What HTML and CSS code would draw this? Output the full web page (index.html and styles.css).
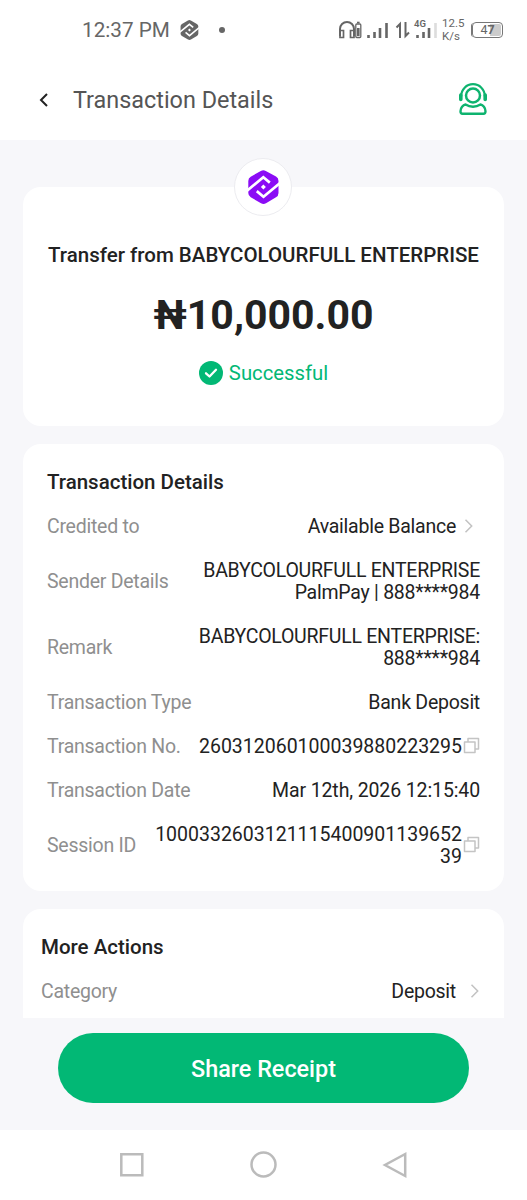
FILE: index.html
```html
<!DOCTYPE html>
<html lang="en">
<head>
    <meta charset="UTF-8">
    <meta name="viewport" content="width=device-width, initial-scale=1.0">
    <title>Transaction Details</title>
    <link rel="stylesheet" href="styles.css">
</head>
<body>
    <!-- Shared icons -->
    <svg class="sprite" width="0" height="0">
        <symbol id="logo" viewBox="0 0 32 34">
            <path fill="currentColor" d="M13.3 .9a5 5 0 0 1 5 0L28.500 6.600a5 5 0 0 1 2.500 4.300V23a5 5 0 0 1-2.500 4.300l-10 5.900a5 5 0 0 1-5 0L3.200 27.300A5 5 0 0 1 .8 23V11a5 5 0 0 1 2.400-4.300z"/>
            <path class="logo-line" d="M-.5 20.700 15.800 7.300l6.500 5.300M32.500 13 16 26.700l-6.700-5.600"/>
            <path class="logo-dot" d="M15.900 14.600l2.500 2.400-2.500 2.400-2.500-2.400z"/>
        </symbol>
        <symbol id="chevron" viewBox="0 0 10 16">
            <path d="M1.500 1.800 7.700 8l-6.200 6.200" fill="none" stroke="#c2c2c2" stroke-width="1.500"/>
        </symbol>
        <symbol id="copy" viewBox="0 0 18 18">
            <path d="M5 4.500V1.500h10.500v10.500h-3.500M1.500 5H12v10.500H1.500z" fill="none" stroke="#c4c4c4" stroke-width="1.500" stroke-linejoin="round"/>
        </symbol>
    </svg>

    <div class="status-bar">
        <span class="time">12:37 PM</span>
        <svg class="status-logo" width="19" height="20"><use href="#logo"/></svg>
        <span class="dot"></span>
        <svg class="signals" width="100" height="24" viewBox="0 0 100 24" fill="none" stroke="#666">
            <path d="M2 18V11a7 7 0 0 1 14 0v7" stroke-width="2"/>
            <path d="M2 12.500h3.500v7H2zM12.500 12.500H16v7h-3.500z" stroke-width="1.700"/>
            <rect x="17.800" y="6" width="5" height="13.500" rx="1" fill="#fff" stroke-width="1.300"/>
            <path d="M20.300 10v8" stroke-width="2.600"/><path d="M19 4.500h2.600" stroke-width="1.600"/>
            <path d="M30.500 17v3M36.500 14v6M42 10v10M48.500 5v15" stroke-width="2.600"/>
            <path d="M58.500 9.500l3.500-3.500v14M67.500 4v14l3.500-3.500" stroke-width="2"/>
            <path d="M79.500 17v3M85.500 14v6M91 10v10" stroke-width="2.600"/>
            <path d="M97.500 5v15" stroke="#ddd" stroke-width="2.600"/>
            <text class="network" x="76" y="8.500">4G</text>
        </svg>
        <span class="speed">12.5<br>K/s</span>
        <div class="battery">4<b>7</b></div>
    </div>

    <header class="header">
        <svg class="back" width="12" height="16" viewBox="0 0 12 16">
            <path d="M9 2 3 8l6 6" fill="none" stroke="#222" stroke-width="2"/>
        </svg>
        <h1>Transaction Details</h1>
        <svg class="support" width="30" height="34" viewBox="0 0 30 34" fill="none" stroke="#0eb36f">
            <circle cx="15" cy="12.500" r="7" stroke-width="2.500"/>
            <path d="M3.200 13.500V13a11.800 11.800 0 0 1 23.600 0v.5" stroke-width="2.200"/>
            <path d="M2.800 12v4.500M27.200 12v4.500" stroke-width="3.600" stroke-linecap="round"/>
            <path d="M7.500 21.500c2 1.300 4.500 2.300 7.500 2.300s5.500-1 7.500-2.300c2.500.5 5 3.200 5 6.700 0 1.500-.5 2.500-2 2.500H4.500c-1.500 0-2-1-2-2.500 0-3.500 2.500-6.200 5-6.700z" stroke-width="2.400" stroke-linejoin="round"/>
        </svg>
    </header>

    <main class="content">
        <section class="card summary">
            <div class="badge">
                <svg width="33" height="34"><use href="#logo"/></svg>
            </div>
            <h2 class="summary-title">Transfer from BABYCOLOURFULL ENTERPRISE</h2>
            <p class="amount">₦10,000.00</p>
            <p class="status">
                <svg width="24" height="24" viewBox="0 0 24 24">
                    <circle cx="12" cy="12" r="12" fill="#02b875"/>
                    <path d="M7 12.300l3.500 3.200 6.500-6.700" fill="none" stroke="#fff" stroke-width="2.300" stroke-linecap="round" stroke-linejoin="round"/>
                </svg>
                <span>Successful</span>
            </p>
        </section>

        <section class="card details">
            <h2>Transaction Details</h2>
            <div class="row">
                <span class="label">Credited to</span>
                <span class="value">Available Balance</span>
                <svg class="chevron" width="10" height="16"><use href="#chevron"/></svg>
            </div>
            <div class="row">
                <span class="label">Sender Details</span>
                <span class="value">BABYCOLOURFULL ENTERPRISE<br>PalmPay | 888****984</span>
            </div>
            <div class="row">
                <span class="label">Remark</span>
                <span class="value">BABYCOLOURFULL ENTERPRISE:<br>888****984</span>
            </div>
            <div class="row">
                <span class="label">Transaction Type</span>
                <span class="value">Bank Deposit</span>
            </div>
            <div class="row">
                <span class="label">Transaction No.</span>
                <span class="value number">260312060100039880223295</span>
                <svg class="copy" width="18" height="18"><use href="#copy"/></svg>
            </div>
            <div class="row">
                <span class="label">Transaction Date</span>
                <span class="value date">Mar 12th, 2026 12:15:40</span>
            </div>
            <div class="row">
                <span class="label">Session ID</span>
                <span class="value number">1000332603121115400901139652<br>39</span>
                <svg class="copy" width="18" height="18"><use href="#copy"/></svg>
            </div>
        </section>

        <section class="card actions">
            <h2>More Actions</h2>
            <div class="row">
                <span class="label">Category</span>
                <span class="value">Deposit</span>
                <svg class="chevron" width="10" height="16"><use href="#chevron"/></svg>
            </div>
        </section>
    </main>

    <footer class="footer">
        <button type="button">Share Receipt</button>
    </footer>

    <nav class="system-nav">
        <svg width="28" height="28" viewBox="0 0 28 28"><path d="M3.300 3.300h21v21h-21z"/></svg>
        <svg width="28" height="28" viewBox="0 0 28 28"><circle cx="13.500" cy="13.500" r="12"/></svg>
        <svg width="28" height="28" viewBox="0 0 28 28"><path d="M24.200 3v22L4 14z"/></svg>
    </nav>
</body>
</html>
```

FILE: styles.css
```css
* {
    box-sizing: border-box;
}
body {
    margin: 0;
    height: 1200px;
    display: flex;
    flex-direction: column;
    overflow: hidden;
    background: #f7f7fa;
    color: #222;
    font-family: Roboto, sans-serif;
    font-size: 19.500px;
    line-height: 22px;
}
h1, h2, p {
    margin: 0;
}
svg {
    display: block;
    flex-shrink: 0;
}
.sprite {
    position: absolute;
}
.logo-line {
    fill: none;
    stroke: #fff;
    stroke-width: 2.700;
}
.logo-dot {
    fill: #fff;
}
.status-bar {
    height: 60px;
    display: flex;
    align-items: center;
    padding: 0 24px 0 82px;
    background: #fff;
    color: #666;
}
.time {
    width: 98px;
    font-size: 20.700px;
    white-space: nowrap;
}
.dot {
    width: 6px;
    height: 6px;
    margin-left: 20px;
    border-radius: 50%;
    background: #666;
}
.signals {
    margin-left: auto;
}
.network {
    fill: #666;
    stroke: none;
    font-size: 9.500px;
    font-weight: 600;
}
.speed {
    width: 24px;
    margin-left: 4px;
    font-size: 11.500px;
    line-height: 13.500px;
}
.battery {
    width: 31px;
    height: 16px;
    margin-left: 6px;
    border: 1.500px solid #777;
    border-radius: 4px;
    box-shadow: -2px 0 0 -1px #777;
    background: linear-gradient(90deg, #fff 58%, #ccc 58%);
    background-clip: content-box;
    padding: 1px;
    font-size: 12.500px;
    line-height: 12px;
    text-align: center;
}
.header {
    height: 80px;
    display: flex;
    align-items: center;
    padding: 0 38px;
    background: #fff;
}
.header h1 {
    margin: 0 auto 0 23px;
    color: #555;
    font-size: 23.400px;
    font-weight: 400;
    line-height: 28px;
}
.support {
    margin-right: 1px;
}
.content {
    height: 878px;
    padding: 47px 23px 0;
    display: flex;
    flex-direction: column;
    gap: 17.500px;
    overflow: hidden;
}
.card {
    flex-shrink: 0;
    padding: 24px;
    border-radius: 18px;
    background: #fff;
}
.card h2 {
    font-size: 20.500px;
    font-weight: 500;
    line-height: 28px;
}
.summary {
    position: relative;
    height: 239px;
    padding: 54px 0 0;
    text-align: center;
}
.badge {
    position: absolute;
    top: -29px;
    left: 50%;
    width: 58px;
    height: 58px;
    margin-left: -29.500px;
    display: flex;
    align-items: center;
    justify-content: center;
    border: 1px solid #ececf0;
    border-radius: 50%;
    background: #fff;
    color: #8b0cf5;
}
.amount {
    margin-top: 22px;
    font-size: 41px;
    font-weight: 700;
    line-height: 48px;
}
.status {
    display: flex;
    align-items: center;
    justify-content: center;
    gap: 6px;
    margin-top: 22px;
    color: #02b875;
    font-size: 20.300px;
    line-height: 24px;
}
.details {
    height: 447.500px;
}
.row {
    display: flex;
    align-items: center;
    margin-bottom: 22px;
    letter-spacing: -0.250px;
    white-space: nowrap;
}
.details h2, .actions h2 {
    margin-bottom: 20px;
}
.label {
    color: #8f8f8f;
}
.value {
    margin-left: auto;
    text-align: right;
}
.number {
    letter-spacing: 0;
}
.date {
    letter-spacing: -0.120px;
}
.chevron {
    margin: -1px 6px 0 8px;
}
.copy {
    margin: -2px -1px 0 1px;
}
.actions {
    height: 130px;
    padding: 24px 18px;
}
.actions .chevron {
    margin: -1px 6px 0 14px;
}
.footer {
    height: 112px;
    padding: 15px 58px;
}
.footer button {
    width: 411px;
    height: 70px;
    padding-top: 3px;
    border: none;
    border-radius: 35px;
    background: #02b875;
    color: #fff;
    font-family: inherit;
    font-size: 23.400px;
    font-weight: 500;
}
.system-nav {
    height: 70px;
    display: flex;
    align-items: center;
    justify-content: space-between;
    padding: 0 118px;
    background: #fff;
}
.system-nav svg {
    fill: none;
    stroke: #bbb;
    stroke-width: 2.500px;
}
```
